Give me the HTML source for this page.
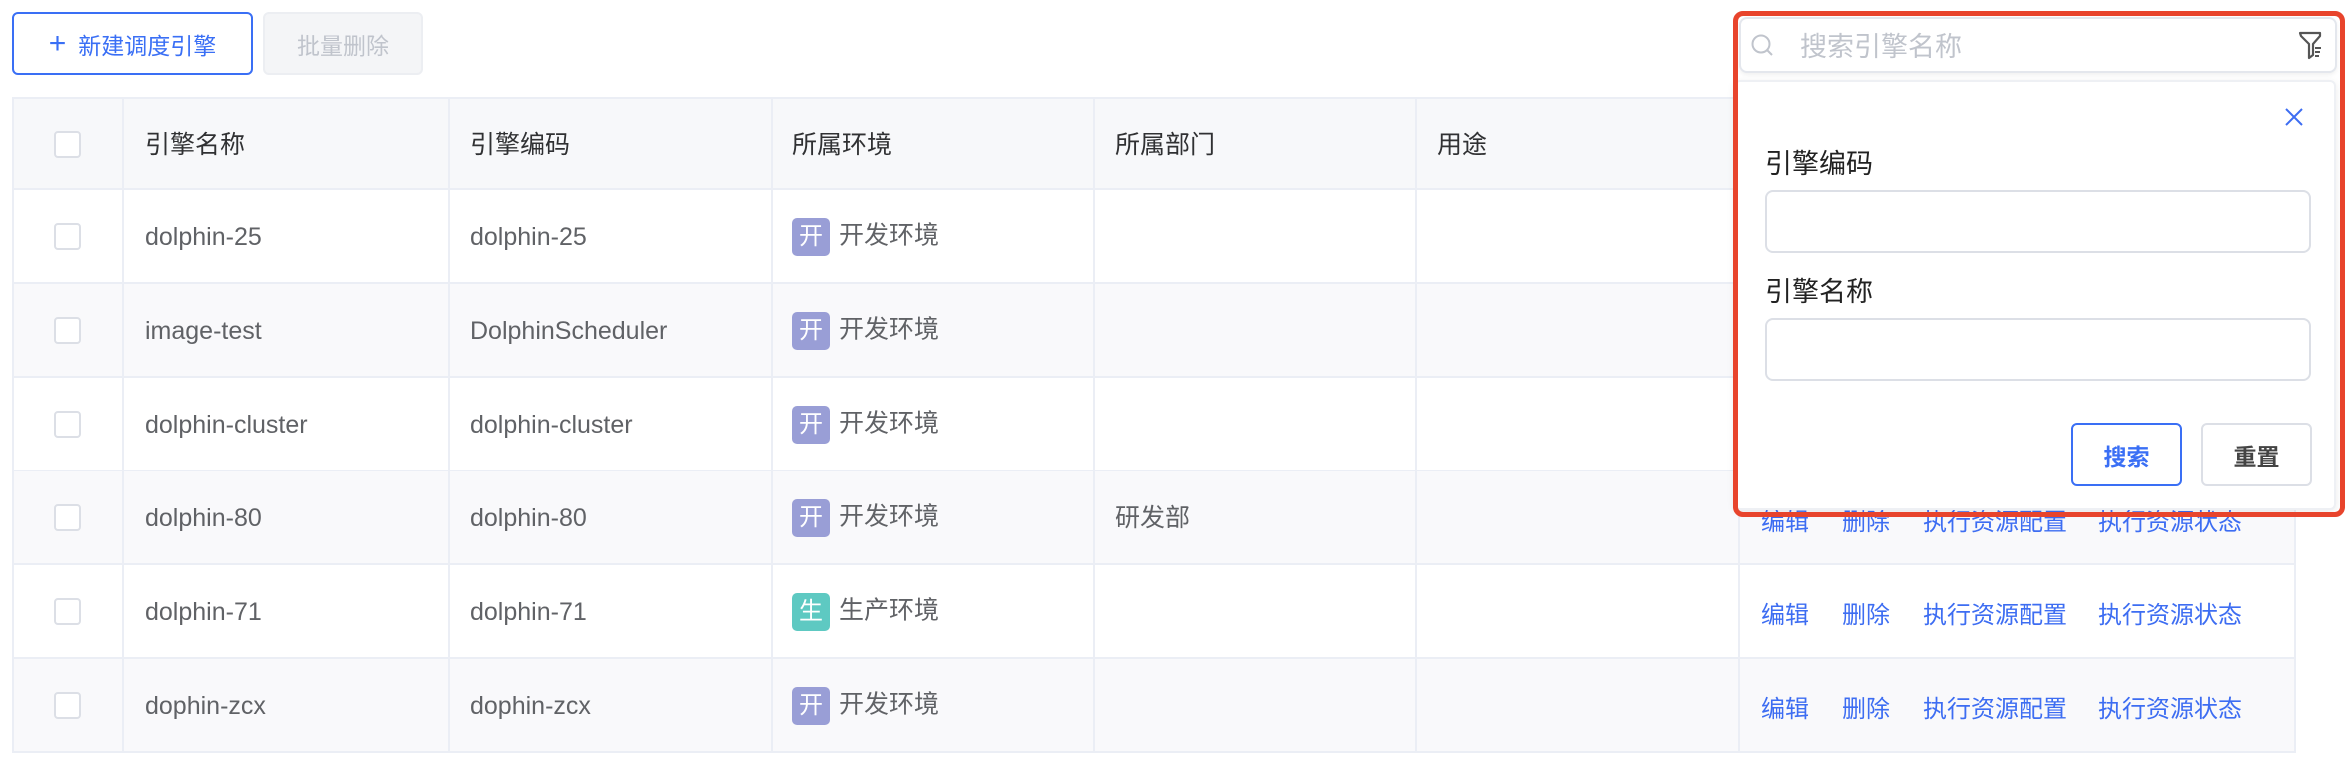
<!DOCTYPE html>
<html><head><meta charset="utf-8">
<style>
*{box-sizing:border-box;margin:0;padding:0}
body{width:2352px;height:766px;background:#fff;position:relative;overflow:hidden;font-family:"Liberation Sans","Noto Sans CJK SC",sans-serif;color:#606266}
.abs{position:absolute}
.btn{position:absolute;border-radius:6px;display:flex;align-items:center;justify-content:center;font-size:23px}
.row{position:absolute;left:12px;width:2284px;height:94px;border-bottom:2px solid #ebeef5}
.vl{position:absolute;top:97px;height:656px;width:2px;background:#ebeef5}
.cell{position:absolute;font-size:25px;line-height:30px}
.cb{position:absolute;left:54px;width:27px;height:27px;border:2px solid #dcdfe6;border-radius:4px;background:#fff}
.tag{display:inline-block;width:38px;height:38px;border-radius:5px;color:#fff;text-align:center;line-height:38px;font-size:24px;vertical-align:middle;margin-right:9px}
.link{position:absolute;font-size:24px;color:#3d6df2}
</style></head><body>
<div class="btn" style="left:12px;top:12px;width:241px;height:63px;border:2px solid #3a6ff5;color:#3a6ff5"><span style="font-size:30px;margin-right:12px;font-weight:300">+</span>新建调度引擎</div>
<div class="btn" style="left:263px;top:12px;width:160px;height:63px;background:#f4f5f7;border:2px solid #eceef2;color:#c0c4cc">批量删除</div>

<div class="row" style="top:97px;height:93px;background:#f7f8fa;border-top:2px solid #ebeef5"></div>
<div class="row" style="top:190px;background:#fff"></div>
<div class="row" style="top:284px;background:#f9f9fb"></div>
<div class="row" style="top:378px;background:#fff"></div>
<div class="row" style="top:471px;background:#f9f9fb"></div>
<div class="row" style="top:565px;background:#fff"></div>
<div class="row" style="top:659px;background:#f9f9fb"></div>
<div class="vl" style="left:12px"></div>
<div class="vl" style="left:122px"></div>
<div class="vl" style="left:448px"></div>
<div class="vl" style="left:771px"></div>
<div class="vl" style="left:1093px"></div>
<div class="vl" style="left:1415px"></div>
<div class="vl" style="left:1738px"></div>
<div class="vl" style="left:2294px"></div>

<div class="cb" style="top:131px"></div>
<div class="cell" style="left:145px;top:130px;color:#303133">引擎名称</div>
<div class="cell" style="left:470px;top:130px;color:#303133">引擎编码</div>
<div class="cell" style="left:792px;top:130px;color:#303133">所属环境</div>
<div class="cell" style="left:1115px;top:130px;color:#303133">所属部门</div>
<div class="cell" style="left:1437px;top:130px;color:#303133">用途</div>

<div class="cb" style="top:223px"></div><div class="cell" style="left:145px;top:222px">dolphin-25</div><div class="cell" style="left:470px;top:222px">dolphin-25</div><div class="cell" style="left:792px;top:218px"><span class="tag" style="background:#999ed6">开</span>开发环境</div>
<div class="cb" style="top:317px"></div><div class="cell" style="left:145px;top:316px">image-test</div><div class="cell" style="left:470px;top:316px">DolphinScheduler</div><div class="cell" style="left:792px;top:312px"><span class="tag" style="background:#999ed6">开</span>开发环境</div>
<div class="cb" style="top:411px"></div><div class="cell" style="left:145px;top:410px">dolphin-cluster</div><div class="cell" style="left:470px;top:410px">dolphin-cluster</div><div class="cell" style="left:792px;top:406px"><span class="tag" style="background:#999ed6">开</span>开发环境</div>
<div class="cb" style="top:504px"></div><div class="cell" style="left:145px;top:503px">dolphin-80</div><div class="cell" style="left:470px;top:503px">dolphin-80</div><div class="cell" style="left:792px;top:499px"><span class="tag" style="background:#999ed6">开</span>开发环境</div><div class="cell" style="left:1115px;top:503px">研发部</div>
<div class="cb" style="top:598px"></div><div class="cell" style="left:145px;top:597px">dolphin-71</div><div class="cell" style="left:470px;top:597px">dolphin-71</div><div class="cell" style="left:792px;top:593px"><span class="tag" style="background:#5ec9c2">生</span>生产环境</div>
<div class="cb" style="top:692px"></div><div class="cell" style="left:145px;top:691px">dophin-zcx</div><div class="cell" style="left:470px;top:691px">dophin-zcx</div><div class="cell" style="left:792px;top:687px"><span class="tag" style="background:#999ed6">开</span>开发环境</div>

<div class="link" style="left:1761px;top:502px">编辑</div><div class="link" style="left:1842px;top:502px">删除</div><div class="link" style="left:1923px;top:502px">执行资源配置</div><div class="link" style="left:2098px;top:502px">执行资源状态</div>
<div class="link" style="left:1761px;top:595px">编辑</div><div class="link" style="left:1842px;top:595px">删除</div><div class="link" style="left:1923px;top:595px">执行资源配置</div><div class="link" style="left:2098px;top:595px">执行资源状态</div>
<div class="link" style="left:1761px;top:689px">编辑</div><div class="link" style="left:1842px;top:689px">删除</div><div class="link" style="left:1923px;top:689px">执行资源配置</div><div class="link" style="left:2098px;top:689px">执行资源状态</div>

<div class="abs" style="left:1734px;top:80px;width:602px;height:430px;background:#fff;border-radius:6px;box-shadow:0 2px 8px rgba(0,0,0,0.08);border:2px solid #eef0f4"></div>
<div class="abs" style="left:1739px;top:17px;width:598px;height:56px;background:#fff;border:2px solid #e4e7ed;border-radius:8px;box-shadow:0 2px 4px rgba(0,0,0,0.06)"></div>
<svg class="abs" style="left:1750px;top:33px" width="26" height="26" viewBox="0 0 26 26"><circle cx="11" cy="11" r="8.5" fill="none" stroke="#c0c4cc" stroke-width="2"/><line x1="17" y1="17" x2="22" y2="22" stroke="#c0c4cc" stroke-width="2"/></svg>
<div class="abs" style="left:1800px;top:25px;font-size:27px;color:#c0c4cc">搜索引擎名称</div>
<svg class="abs" style="left:2298px;top:30px" width="26" height="34" viewBox="0 0 26 34"><path d="M2 3 H22 L22 6 L15 14 V25 L11 28 V14 L3 6 Z" fill="none" stroke="#555" stroke-width="2.2" stroke-linejoin="round"/><line x1="17" y1="18" x2="23" y2="18" stroke="#555" stroke-width="2"/><line x1="17" y1="22" x2="22" y2="22" stroke="#555" stroke-width="2"/><line x1="17" y1="26" x2="21" y2="26" stroke="#555" stroke-width="2"/></svg>
<svg class="abs" style="left:2284px;top:107px" width="20" height="20" viewBox="0 0 20 20"><path d="M2 2 L18 18 M18 2 L2 18" stroke="#3d6df2" stroke-width="2"/></svg>
<div class="abs" style="left:1765px;top:142px;font-size:27px;color:#222">引擎编码</div>
<div class="abs" style="left:1765px;top:190px;width:546px;height:63px;border:2px solid #dcdfe6;border-radius:8px"></div>
<div class="abs" style="left:1765px;top:270px;font-size:27px;color:#222">引擎名称</div>
<div class="abs" style="left:1765px;top:318px;width:546px;height:63px;border:2px solid #dcdfe6;border-radius:8px"></div>
<div class="btn" style="left:2071px;top:423px;width:111px;height:63px;border:2px solid #3a6ff5;color:#3a6ff5;font-weight:bold">搜索</div>
<div class="btn" style="left:2201px;top:423px;width:111px;height:63px;border:2px solid #dcdfe6;color:#444;font-weight:bold">重置</div>
<div class="abs" style="left:1733px;top:11px;width:612px;height:506px;border:5px solid #e8442c;border-radius:10px"></div>
</body></html>
